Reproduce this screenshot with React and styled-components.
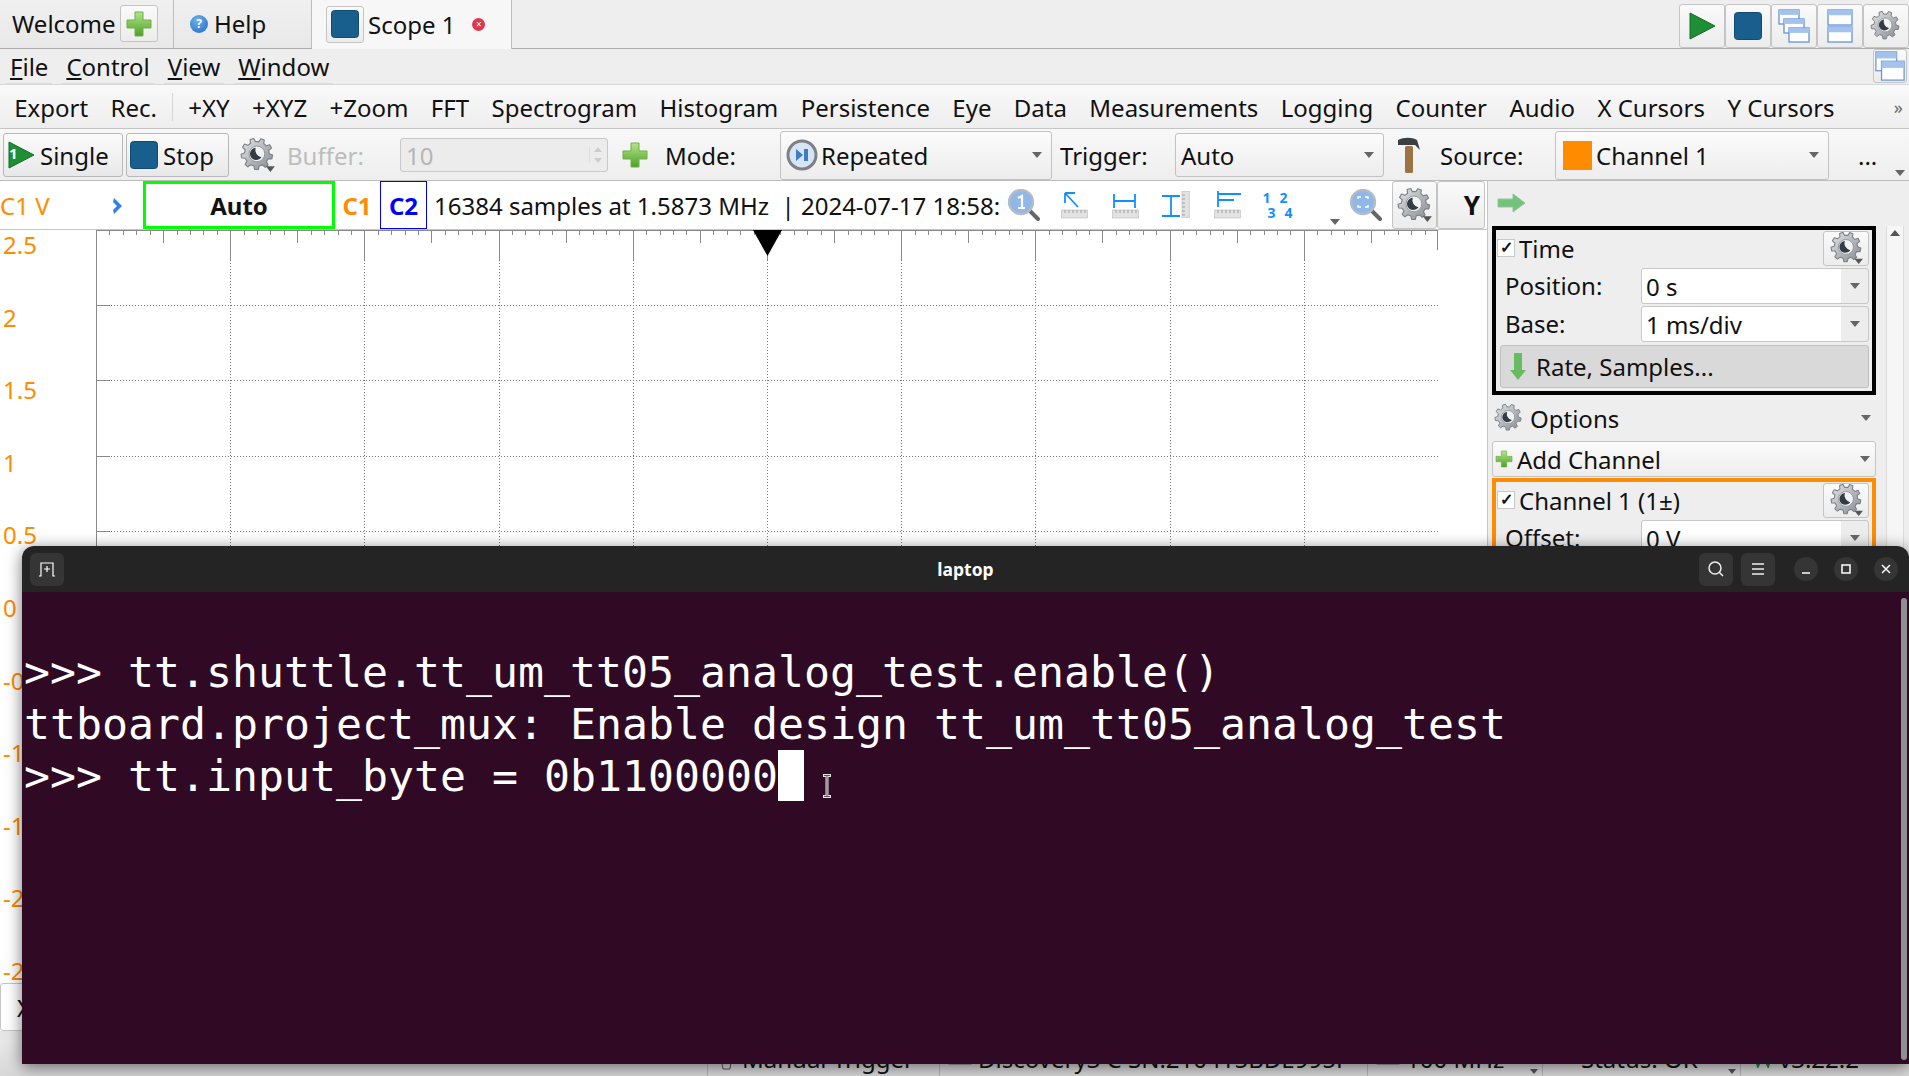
import React from 'react'
import styled, { createGlobalStyle } from 'styled-components'

const GlobalStyle = createGlobalStyle`
  html, body { margin: 0; padding: 0; background: #eee; overflow: hidden; }
  * { box-sizing: border-box; }
  body { font-family: "Noto Sans", "Liberation Sans", sans-serif; color: #111; }
`

const gearPath = (cx, cy, r1, r2, n) => {
  let d = ''
  const step = (Math.PI * 2) / n
  for (let i = 0; i < n; i++) {
    const a = i * step + 0.2
    const pts = [[a - step * 0.3, r1], [a - step * 0.17, r2], [a + step * 0.17, r2], [a + step * 0.3, r1]]
    pts.forEach(([t, r], k) => {
      const x = (cx + Math.cos(t) * r).toFixed(1)
      const y = (cy + Math.sin(t) * r).toFixed(1)
      d += `${i === 0 && k === 0 ? 'M' : 'L'}${x} ${y}`
    })
  }
  return d + 'Z'
}

const Gear = ({ size = 32, arrow }) => (
  <svg width={size} height={size} viewBox="0 0 32 32">
    <defs>
      <linearGradient id="gearFill" x1="0" y1="0" x2="1" y2="1">
        <stop offset="0" stopColor="#e4e6e8" />
        <stop offset="1" stopColor="#868b91" />
      </linearGradient>
    </defs>
    <path d={gearPath(15, 15, 11, 14, 9)} fill="url(#gearFill)" stroke="#7b8086" strokeWidth="1" strokeLinejoin="round" />
    <circle cx="15" cy="15" r="7" fill="#f1f2f3" stroke="#8c9096" strokeWidth="0.8" />
    <path d="M14 9.5a5.5 5.5 0 1 0 5 8.5 6.5 6.5 0 0 1-5-8.500z" fill="#333b45" />
    {arrow && <path d="M23 26h8l-4 5z" fill="#555" />}
  </svg>
)

const Plus = ({ size = 30 }) => (
  <svg width={size} height={size} viewBox="0 0 30 30">
    <defs>
      <linearGradient id="plusFill" x1="0" y1="0" x2="0" y2="1">
        <stop offset="0" stopColor="#b4e58c" />
        <stop offset="1" stopColor="#4f9f26" />
      </linearGradient>
    </defs>
    <path d="M11 3h8v8h8v8h-8v8h-8v-8H3v-8h8z" fill="url(#plusFill)" stroke="#6fb04a" strokeWidth="1" strokeLinejoin="round" />
  </svg>
)

const Play = ({ size = 30 }) => (
  <svg width={size} height={size} viewBox="0 0 30 30">
    <path d="M3 2l25 13L3 28z" fill="#1d8f35" stroke="#146a27" strokeWidth="1" strokeLinejoin="round" />
  </svg>
)

const StopIcon = ({ size = 30 }) => (
  <svg width={size} height={size} viewBox="0 0 30 30">
    <rect x="1.5" y="1.5" width="27" height="27" rx="3" fill="#185f8e" stroke="#134a6f" />
  </svg>
)

const Win = ({ x, y, w, h }) => (
  <g>
    <rect x={x} y={y} width={w} height={h} fill="#fff" stroke="#6f9ad4" strokeWidth="1.4" />
    <rect x={x} y={y} width={w} height={h * 0.35} fill="#a3c3ec" />
  </g>
)

const WindowsIcon = ({ kind }) => (
  <svg width="34" height="36" viewBox="0 0 34 36">
    {kind === 'stack' && <><Win x={2} y={2} w={20} h={14} /><Win x={7} y={11} w={20} h={14} /><Win x={12} y={20} w={20} h={14} /></>}
    {kind === 'rows' && <><Win x={5} y={2} w={24} h={15} /><Win x={5} y={19} w={24} h={15} /></>}
    {kind === 'pair' && <><Win x={2} y={3} w={22} h={20} /><Win x={8} y={13} w={24} h={20} /></>}
  </svg>
)

const Hammer = () => (
  <svg width="26" height="38" viewBox="0 0 26 38">
    <rect x="9" y="10" width="8" height="27" rx="1.5" fill="#9c7443" />
    <path d="M2 4c6-3 14-3 19 0l3 10-5-5H8L2 9z" fill="#3b3f44" />
  </svg>
)

const RepeatIcon = () => (
  <svg width="32" height="32" viewBox="0 0 32 32">
    <circle cx="16" cy="16" r="14" fill="#d6e4f6" stroke="#7d8084" strokeWidth="3" />
    <path d="M10 10l7 6-7 6zM18 10h4v12h-4z" fill="#3f7cc4" />
  </svg>
)

const Lens = ({ inner }) => (
  <svg width="32" height="32" viewBox="0 0 32 32">
    <path d="M21 21l9 9" stroke="#666" strokeWidth="4" strokeLinecap="round" />
    <circle cx="13" cy="13" r="12" fill="#8fb7e8" stroke="#b6bcc4" strokeWidth="2.4" />
    {inner === 'fit' && <path d="M8 10V8h3M15 8h3v2M18 16v2h-3M11 18H8v-2" stroke="#fff" strokeWidth="1.4" fill="none" />}
    {inner === 'one' && <path d="M10 9l4-2v12M10 19h7" stroke="#fff" strokeWidth="2.2" fill="none" />}
  </svg>
)

const Ruler = ({ vertical }) => vertical ? (
  <g>
    <rect x="20" y="0.5" width="8" height="26" fill="#e2e2e2" stroke="#bbb" strokeWidth="0.6" />
    {[4, 8, 12, 16, 20, 24].map((y) => <path key={y} d={`M20 ${y}h3`} stroke="#888" strokeWidth="0.7" />)}
  </g>
) : (
  <g>
    <rect x="0.5" y="19" width="26" height="8" fill="#e2e2e2" stroke="#bbb" strokeWidth="0.6" />
    {[4, 8, 12, 16, 20, 24].map((x) => <path key={x} d={`M${x} 19v3`} stroke="#888" strokeWidth="0.7" />)}
  </g>
)

const RulerIcon = ({ kind }) => (
  <svg width="28" height="28" viewBox="0 0 28 28">
    <Ruler vertical={kind === 'beam'} />
    <g stroke="#1090ff" strokeWidth="1.8" fill="none">
      {kind === 'arrow' && <path d="M4 2l13 14M4 2v10M4 2h10" />}
      {kind === 'width' && <path d="M2 3v14M23 3v14M2 10h21" />}
      {kind === 'beam' && <path d="M0 5h18M0 25h18M9 5v20" />}
      {kind === 'levels' && <path d="M4 0v16M4 3h23M4 9h16" />}
    </g>
  </svg>
)

const Screen = styled.div`
  position: relative;
  width: 1909px;
  height: 1076px;
  overflow: hidden;
  display: flex;
  flex-direction: column;
  background: #eee;
  font-size: 24px;
`

const TabBar = styled.div`
  height: 49px;
  flex: none;
  display: flex;
  border-bottom: 1px solid #aeaeae;
  background: #eee;
`

const Tab = styled.div`
  width: ${(p) => p.$w}px;
  height: ${(p) => (p.$active ? 49 : 48)}px;
  display: flex;
  align-items: center;
  padding-left: ${(p) => p.$pad}px;
  padding-bottom: 1px;
  gap: ${(p) => p.$gap || 0}px;
  background: ${(p) => (p.$active ? '#f7f7f7' : 'linear-gradient(#f0f0f0, #e8e8e8)')};
  border-right: 1px solid #bdbdbd;
`

const IconButton = styled.div`
  width: ${(p) => p.$w || 46}px;
  height: ${(p) => p.$h || 44}px;
  flex: none;
  display: flex;
  align-items: center;
  justify-content: center;
  border: 1px solid #c4c4c4;
  border-radius: 3px;
  background: linear-gradient(#fafafa, #ececec);
`

const GearButton = styled(IconButton)`
  justify-content: flex-start;
  padding-left: 6px;
`

const HelpDot = styled.span`
  width: 18px;
  height: 18px;
  border-radius: 50%;
  background: radial-gradient(circle at 40% 30%, #6fb0ee, #1f68c4);
  color: #fff;
  font-size: 12px;
  font-weight: 700;
  display: flex;
  align-items: center;
  justify-content: center;
`

const CloseDot = styled.span`
  width: 13px;
  height: 13px;
  margin-left: 13px;
  border-radius: 50%;
  background: #e0364c;
  color: #fff;
  font-size: 10px;
  line-height: 13px;
  text-align: center;
`

const TabFill = styled.div`
  flex: 1;
`

const TopActions = styled.div`
  display: flex;
  align-self: flex-start;
  padding-top: 4px;
  height: 48px;
  & > div { height: 44px; }
`

const MenuRow = styled.div`
  height: 36px;
  flex: none;
  display: flex;
  align-items: stretch;
  justify-content: space-between;
  padding-left: 6px;
  padding-right: 2px;
  background: #eee;
  border-bottom: 1px solid #d8d8d8;
`

const MenuList = styled.div`
  display: flex;
  gap: 10px;
`

const MenuItem = styled.div`
  padding: 0 4px;
  display: flex;
  align-items: center;
  border-bottom: 1px solid #dcdcdc;
`

const ToolRow = styled.div`
  height: 44px;
  flex: none;
  display: flex;
  align-items: center;
  padding: 1px 0 0 3px;
  background: linear-gradient(#f9f9f9, #eee);
  border-bottom: 1px solid #c4c4c4;
`

const ToolItem = styled.div`
  padding: 0 11.2px;
  white-space: nowrap;
`

const ToolSep = styled.div`
  width: 1px;
  height: 28px;
  margin: 0 4px;
  background: #d6d6d6;
`

const MoreMark = styled.div`
  margin-left: auto;
  padding-right: 6px;
  font-size: 18px;
  color: #666;
`

const ControlRow = styled.div`
  height: 52px;
  flex: none;
  display: flex;
  align-items: center;
  padding: 1px 0 0 3px;
  background: linear-gradient(#f8f8f8, #eee);
  border-bottom: 1px solid #bcbcbc;
`

const ActionButton = styled.div`
  width: ${(p) => p.$w}px;
  height: 44px;
  margin-right: 3px;
  flex: none;
  display: flex;
  align-items: center;
  gap: 4px;
  padding-left: 2px;
  border: 1px solid #b8b8b8;
  border-radius: 3px;
  background: linear-gradient(#fbfbfb, #e8e8e8);
`

const PlayBadge = styled.span`
  position: relative;
  display: flex;
  & > b {
    position: absolute;
    left: 3px;
    top: 3px;
    color: #fff;
    font-size: 15px;
    font-weight: 700;
  }
`

const Slot = styled.div`
  width: ${(p) => p.$w}px;
  margin-left: ${(p) => p.$ml || 0}px;
  flex: none;
  display: flex;
  align-items: center;
  color: ${(p) => (p.$muted ? '#bdbdbd' : 'inherit')};
`

const SpinBox = styled.div`
  width: 208px;
  height: 34px;
  flex: none;
  display: flex;
  align-items: center;
  justify-content: space-between;
  padding: 0 5px;
  color: #b5b5b5;
  border: 1px solid #c8c8c8;
  border-radius: 3px;
  background: #ececec;
`

const SpinArrows = styled.span`
  display: flex;
  flex-direction: column;
  gap: 6px;
  padding-left: 4px;
  border-left: 1px solid #ddd;
  &::before, &::after {
    content: '';
    border-left: 4px solid transparent;
    border-right: 4px solid transparent;
  }
  &::before { border-bottom: 5px solid #ccc; }
  &::after { border-top: 5px solid #ccc; }
`

const Combo = styled.div`
  width: ${(p) => p.$w}px;
  height: ${(p) => p.$h}px;
  flex: none;
  display: flex;
  align-items: center;
  gap: ${(p) => p.$gap || 0}px;
  padding-left: ${(p) => p.$pad || 5}px;
  position: relative;
  border: 1px solid #c2c2c2;
  border-radius: 3px;
  background: linear-gradient(#fbfbfb, #ededed);
`

const Caret = styled.span`
  position: absolute;
  right: ${(p) => p.$r || 9}px;
  top: 50%;
  margin-top: -3px;
  border-left: 5px solid transparent;
  border-right: 5px solid transparent;
  border-top: 6px solid #666;
`

const Swatch = styled.span`
  width: 29px;
  height: 29px;
  background: #ff8c00;
`

const Workspace = styled.div`
  flex: 1;
  min-height: 0;
  display: flex;
`

const MainColumn = styled.div`
  width: 1488px;
  flex: none;
  display: flex;
  flex-direction: column;
  background: #fff;
  border-right: 1px solid #c6c6c6;
`

const InfoRow = styled.div`
  height: 49px;
  flex: none;
  display: flex;
  align-items: center;
  background: #fff;
  border-bottom: 1px solid #c6c6c6;
`

const AxisName = styled.div`
  width: 117px;
  flex: none;
  color: #ff8c00;
  position: relative;
  & > svg {
    position: absolute;
    left: 111px;
    top: 8px;
  }
`

const AutoBox = styled.div`
  width: 192px;
  height: 48px;
  margin-left: 26px;
  flex: none;
  display: flex;
  align-items: center;
  justify-content: center;
  font-weight: 700;
  border: 3px solid #00ff00;
`

const ChannelTag = styled.div`
  width: ${(p) => p.$w}px;
  height: 48px;
  margin-left: ${(p) => p.$ml}px;
  flex: none;
  display: flex;
  align-items: center;
  justify-content: center;
  font-weight: 700;
  color: ${(p) => p.$color};
  border: ${(p) => (p.$boxed ? `1px solid ${p.$color}` : 'none')};
`

const InfoText = styled.div`
  margin-left: 7px;
  width: 572px;
  flex: none;
  white-space: pre;
`

const InfoIcon = styled.div`
  margin-left: ${(p) => p.$ml}px;
  flex: none;
  display: flex;
`

const NumberGrid = styled.div`
  margin-left: 16px;
  width: 34px;
  flex: none;
  display: grid;
  grid-template-columns: 1fr 1fr;
  font-size: 14px;
  font-weight: 700;
  line-height: 15px;
  text-align: center;
  color: #1090ff;
  & > span:nth-child(n + 3) { transform: translateX(5px); }
`

const SmallCaret = styled.span`
  margin-left: ${(p) => p.$ml}px;
  align-self: flex-end;
  margin-bottom: 4px;
  flex: none;
  border-left: 5px solid transparent;
  border-right: 5px solid transparent;
  border-top: 6px solid #666;
`

const YTag = styled(IconButton)`
  width: 48px;
  height: 48px;
  justify-content: flex-end;
  padding-right: 4px;
  font-size: 26px;
  font-weight: 700;
`

const PlotRow = styled.div`
  flex: 1;
  min-height: 0;
  display: flex;
  overflow: hidden;
`

const YAxis = styled.div`
  width: 96px;
  flex: none;
  display: flex;
  flex-direction: column;
  gap: 42.6px;
  padding-left: 3px;
  color: #ff8c00;
`

const YLabel = styled.div`
  height: 30px;
  line-height: 30px;
`

const XRow = styled.div`
  height: 48px;
  flex: none;
  display: flex;
  align-items: center;
  padding-left: 16px;
  background: #fff;
  border: 1px solid #c6c6c6;
  border-radius: 3px;
`

const BottomGap = styled.div`
  height: 9px;
  flex: none;
  background: #e6e6e6;
`

const SideColumn = styled.div`
  flex: 1;
  display: flex;
  flex-direction: column;
  overflow: hidden;
  background: #eee;
`

const SideHeader = styled.div`
  height: 45px;
  flex: none;
  padding: 6px 0 0 9px;
`

const SideBody = styled.div`
  display: flex;
  align-items: flex-start;
`

const SideStack = styled.div`
  width: 384px;
  margin-left: 4px;
  flex: none;
  display: flex;
  flex-direction: column;
`

const Scroll = styled.div`
  width: 18px;
  height: 800px;
  margin-left: 10px;
  flex: none;
  background: #f6f6f6;
  border-left: 1px solid #ddd;
  border-right: 1px solid #ddd;
  display: flex;
  justify-content: center;
  padding-top: 4px;
  &::before {
    content: '';
    height: 0;
    border-left: 5px solid transparent;
    border-right: 5px solid transparent;
    border-bottom: 6px solid #555;
  }
`

const Group = styled.div`
  border: 4px solid ${(p) => p.$color};
  padding: 0 3px 3px 1px;
  display: flex;
  flex-direction: column;
`

const GroupHead = styled.div`
  height: 36px;
  display: flex;
  align-items: center;
  justify-content: space-between;
`

const Check = styled.label`
  display: flex;
  align-items: center;
  gap: 4px;
  &::before {
    content: '✓';
    width: 16px;
    height: 16px;
    font-size: 16px;
    line-height: 15px;
    text-align: center;
    font-weight: 700;
    background: #fff;
    border: 1px solid #c8c8c8;
  }
`

const FieldRow = styled.div`
  display: flex;
  align-items: center;
  justify-content: space-between;
  padding-left: 8px;
  height: 37px;
  margin-top: 1px;
`

const Field = styled.div`
  width: 228px;
  height: 36px;
  position: relative;
  padding-left: 4px;
  line-height: 35px;
  background: linear-gradient(90deg, #fff 88%, #ededed 88%);
  border: 1px solid #c8c8c8;
  border-radius: 3px;
`

const RateButton = styled.div`
  height: 43px;
  margin: 3px 0 0 3px;
  display: flex;
  align-items: center;
  gap: 9px;
  padding-left: 8px;
  background: #d9d9d9;
  border: 1px solid #c0c0c0;
  border-radius: 3px;
`

const OptionsRow = styled.div`
  height: 46px;
  position: relative;
  display: flex;
  align-items: center;
  gap: 6px;
  padding-left: 2px;
`

const AddButton = styled.div`
  height: 36px;
  margin-bottom: 1px;
  position: relative;
  display: flex;
  align-items: center;
  gap: 3px;
  padding-left: 1px;
  background: linear-gradient(#fbfbfb, #ededed);
  border: 1px solid #c4c4c4;
  border-radius: 3px;
`

const StatusBar = styled.div`
  height: 36px;
  flex: none;
  display: flex;
  align-items: center;
  background: linear-gradient(#e8e8e8, #d8d8d8);
`

const StatusCell = styled.div`
  width: ${(p) => p.$w}px;
  height: 36px;
  flex: none;
  position: relative;
  display: flex;
  align-items: center;
  gap: 6px;
  padding-left: ${(p) => p.$pad}px;
  border-left: ${(p) => (p.$line ? '1px solid #b8b8b8' : 'none')};
`

const StatusCaret = styled.span`
  position: absolute;
  right: 4px;
  bottom: 2px;
  border-left: 4px solid transparent;
  border-right: 4px solid transparent;
  border-top: 5px solid #555;
`

const Terminal = styled.div`
  position: absolute;
  left: 22px;
  top: 546px;
  width: 1887px;
  height: 518px;
  display: flex;
  flex-direction: column;
  border-radius: 12px 12px 0 0;
  overflow: hidden;
`

const TerminalShadow = styled.div`
  position: absolute;
  left: 22px;
  top: 546px;
  width: 1887px;
  height: 518px;
  border-radius: 12px 12px 0 0;
  box-shadow: 0 3px 16px rgba(0, 0, 0, 0.55);
`

const TerminalBar = styled.div`
  height: 46px;
  flex: none;
  display: flex;
  align-items: center;
  padding: 0 11px 0 8px;
  background: #242424;
`

const BarButton = styled.div`
  width: 34px;
  height: 33px;
  flex: none;
  display: flex;
  align-items: center;
  justify-content: center;
  margin-left: ${(p) => p.$ml || 0}px;
  border-radius: 6px;
  background: #353535;
`

const RoundButton = styled(BarButton)`
  width: 24px;
  height: 24px;
  border-radius: 50%;
  margin-left: ${(p) => p.$ml}px;
`

const TerminalTitle = styled.div`
  flex: 1;
  text-align: center;
  padding-left: 168px;
  color: #fff;
  font-size: 17.5px;
  font-weight: 700;
`

const TerminalBody = styled.div`
  flex: 1;
  position: relative;
  padding: 54px 0 0 2px;
  background: #300a24;
  color: #fff;
  font-family: "DejaVu Sans Mono", monospace;
  font-size: 43.2px;
  line-height: 52.2px;
  white-space: pre;
`

const Cursor = styled.span`
  display: inline-block;
  width: 26px;
  height: 51px;
  vertical-align: top;
  background: #fff;
`

const IBeam = styled.svg`
  position: absolute;
  left: 800px;
  top: 182px;
`

const ScrollThumb = styled.div`
  position: absolute;
  right: 2px;
  top: 6px;
  bottom: 4px;
  width: 6px;
  border-radius: 3px;
  background: #8f8f8f;
`

const ARROW_ICON = <svg width="29" height="20" viewBox="0 0 29 20"><path d="M1 6h15V1l12 9-12 9v-5H1z" fill="#74c27c" stroke="#8fc994" /></svg>

const toolNames = ['+XY', '+XYZ', '+Zoom', 'FFT', 'Spectrogram', 'Histogram', 'Persistence', 'Eye', 'Data', 'Measurements', 'Logging', 'Counter', 'Audio', 'X Cursors', 'Y Cursors']
const yLabels = ['2.5', '2', '1.5', '1', '0.5', '0', '-0.5', '-1', '-1.5', '-2', '-2.5']

const PlotGrid = () => {
  const W = 1342
  const H = 760
  const dx = 134.2
  const dy = 75.2
  const cols = Array.from({ length: 11 }, (_, i) => i * dx)
  const rows = Array.from({ length: 11 }, (_, i) => i * dy)
  const minor = Array.from({ length: 101 }, (_, i) => i * (dx / 10))
  return (
    <svg width={W} height={H} viewBox={`0 0 ${W} ${H}`}>
      {rows.slice(1).map((y) => <path key={y} d={`M0 ${Math.round(y) + 0.5}H${W}`} stroke="#777" strokeDasharray="1 2" />)}
      {cols.slice(1).map((x) => <path key={x} d={`M${Math.round(x) + 0.5} 0V${H}`} stroke="#777" strokeDasharray="1 2" />)}
      {minor.map((x, i) => (
        <path key={x} d={`M${Math.round(x) + 0.5} 0v${i % 10 === 0 ? 30 : i % 5 === 0 ? 13 : 5}`} stroke="#8a8a8a" />
      ))}
      {rows.map((y) => <path key={y} d={`M0 ${Math.round(y) + 0.5}h14`} stroke="#8a8a8a" />)}
      <path d="M0.5 0V760M0 0.5H1342M1341.5 0V20" stroke="#8a8a8a" fill="none" />
      <path d="M657 0h29l-14.5 26z" fill="#000" />
    </svg>
  )
}

const App = () => (
  <>
    <GlobalStyle />
    <Screen>
      <TabBar>
        <Tab $w={174} $pad={12} $gap={4}>
          Welcome
          <IconButton $w={38} $h={37}><Plus /></IconButton>
        </Tab>
        <Tab $w={138} $pad={16} $gap={6}><HelpDot>?</HelpDot>Help</Tab>
        <Tab $w={200} $pad={14} $gap={4} $active>
          <IconButton $w={38} $h={37}><StopIcon /></IconButton>
          Scope 1
          <CloseDot>×</CloseDot>
        </Tab>
        <TabFill />
        <TopActions>
          <IconButton><Play /></IconButton>
          <IconButton><StopIcon /></IconButton>
          <IconButton><WindowsIcon kind="stack" /></IconButton>
          <IconButton><WindowsIcon kind="rows" /></IconButton>
          <IconButton><Gear /></IconButton>
        </TopActions>
      </TabBar>

      <MenuRow>
        <MenuList>
          <MenuItem><span><u>F</u>ile</span></MenuItem>
          <MenuItem><span><u>C</u>ontrol</span></MenuItem>
          <MenuItem><span><u>V</u>iew</span></MenuItem>
          <MenuItem><span><u>W</u>indow</span></MenuItem>
        </MenuList>
        <IconButton $w={34} $h={34}><WindowsIcon kind="pair" /></IconButton>
      </MenuRow>

      <ToolRow>
        <ToolItem>Export</ToolItem>
        <ToolItem>Rec.</ToolItem>
        <ToolSep />
        {toolNames.map((name) => <ToolItem key={name}>{name}</ToolItem>)}
        <MoreMark>»</MoreMark>
      </ToolRow>

      <ControlRow>
        <ActionButton $w={120}>
          <PlayBadge><Play /><b>1</b></PlayBadge>
          Single
        </ActionButton>
        <ActionButton $w={103}><StopIcon />Stop</ActionButton>
        <Slot $ml={8} $w={36}><Gear size={36} arrow /></Slot>
        <Slot $ml={11} $w={113} $muted>Buffer:</Slot>
        <SpinBox>10<SpinArrows /></SpinBox>
        <Slot $ml={12} $w={30}><Plus /></Slot>
        <Slot $ml={15} $w={115}>Mode:</Slot>
        <Combo $w={272} $h={49} $gap={3} $pad={5}>
          <RepeatIcon />
          Repeated
          <Caret />
        </Combo>
        <Slot $ml={8} $w={115}>Trigger:</Slot>
        <Combo $w={209} $h={44}>Auto<Caret /></Combo>
        <Slot $ml={12} $w={26}><Hammer /></Slot>
        <Slot $ml={18} $w={115}>Source:</Slot>
        <Combo $w={274} $h={49} $gap={4} $pad={7}>
          <Swatch />
          Channel 1
          <Caret />
        </Combo>
        <Slot $ml={29} $w={30}>...</Slot>
        <SmallCaret $ml={7} />
      </ControlRow>

      <Workspace>
        <MainColumn>
          <InfoRow>
            <AxisName>
              C1 V
              <svg width="14" height="18" viewBox="0 0 14 18"><path d="M3 1l8 8-8 8 -1-4 4-4-4-4z" fill="#2f80ed" /></svg>
            </AxisName>
            <AutoBox>Auto</AutoBox>
            <ChannelTag $w={30} $ml={7} $color="#ff8c00">C1</ChannelTag>
            <ChannelTag $w={47} $ml={8} $color="#0000ff" $boxed>C2</ChannelTag>
            <InfoText>16384 samples at 1.5873 MHz  | 2024-07-17 18:58:</InfoText>
            <InfoIcon $ml={2}><Lens inner="one" /></InfoIcon>
            <InfoIcon $ml={21}><RulerIcon kind="arrow" /></InfoIcon>
            <InfoIcon $ml={23}><RulerIcon kind="width" /></InfoIcon>
            <InfoIcon $ml={22}><RulerIcon kind="beam" /></InfoIcon>
            <InfoIcon $ml={24}><RulerIcon kind="levels" /></InfoIcon>
            <NumberGrid><span>1</span><span>2</span><span>3</span><span>4</span></NumberGrid>
            <SmallCaret $ml={38} />
            <InfoIcon $ml={10}><Lens inner="fit" /></InfoIcon>
            <InfoIcon $ml={10}><IconButton $w={45} $h={48}><Gear size={36} arrow /></IconButton></InfoIcon>
            <YTag>Y</YTag>
          </InfoRow>
          <PlotRow>
            <YAxis>
              {yLabels.map((label) => <YLabel key={label}>{label}</YLabel>)}
            </YAxis>
            <PlotGrid />
          </PlotRow>
          <XRow>X</XRow>
          <BottomGap />
        </MainColumn>

        <SideColumn>
          <SideHeader>{ARROW_ICON}</SideHeader>
          <SideBody>
            <SideStack>
              <Group $color="#000">
                <GroupHead>
                  <Check>Time</Check>
                  <GearButton $w={46} $h={35}><Gear size={34} arrow /></GearButton>
                </GroupHead>
                <FieldRow>Position:<Field>0 s<Caret $r={8} /></Field></FieldRow>
                <FieldRow>Base:<Field>1 ms/div<Caret $r={8} /></Field></FieldRow>
                <RateButton>
                  <svg width="18" height="29" viewBox="0 0 18 29"><path d="M5 1h8v17h4l-8 10-8-10h4z" fill="#69bb62" /></svg>
                  Rate, Samples...
                </RateButton>
              </Group>
              <OptionsRow><Gear size={30} />Options<Caret $r={5} /></OptionsRow>
              <AddButton><Plus size={20} />Add Channel<Caret $r={5} /></AddButton>
              <Group $color="#ff8c00">
                <GroupHead>
                  <Check>Channel 1 (1±)</Check>
                  <GearButton $w={46} $h={35}><Gear size={34} arrow /></GearButton>
                </GroupHead>
                <FieldRow>Offset:<Field>0 V<Caret $r={8} /></Field></FieldRow>
              </Group>
            </SideStack>
            <Scroll />
          </SideBody>
        </SideColumn>
      </Workspace>

      <StatusBar>
        <StatusCell $w={707} $pad={0} />
        <StatusCell $w={232} $pad={8} $line>
          <svg width="20" height="28" viewBox="0 0 20 28"><path d="M3 3h14l-3 22H7z" fill="#ddd" stroke="#555" /></svg>
          Manual Trigger
        </StatusCell>
        <StatusCell $w={428} $pad={8} $line>
          <svg width="24" height="18" viewBox="0 0 24 18"><rect x="1" y="3" width="22" height="12" fill="#bbb" stroke="#777" /></svg>
          Discovery3 C SN:210415BDE995F
        </StatusCell>
        <StatusCell $w={175} $pad={8} $line>
          <svg width="24" height="18" viewBox="0 0 24 18"><rect x="1" y="3" width="22" height="12" fill="#bbb" stroke="#777" /></svg>
          100 MHz
          <StatusCaret />
        </StatusCell>
        <StatusCell $w={198} $pad={38} $line>Status: OK<StatusCaret /></StatusCell>
        <StatusCell $w={143} $pad={12} $line>
          <svg width="20" height="20" viewBox="0 0 20 20"><path d="M1 2l4 15 5-11 5 11 4-15" fill="none" stroke="#1a8a4a" strokeWidth="3" /></svg>
          v3.22.2
        </StatusCell>
      </StatusBar>

      <TerminalShadow />
      <Terminal>
        <TerminalBar>
          <BarButton>
            <svg width="18" height="18" viewBox="0 0 18 18" fill="none" stroke="#fff" strokeWidth="1.2"><path d="M1 16h2V3h12v13h2M9 6v6M6 9h6" /></svg>
          </BarButton>
          <TerminalTitle>laptop</TerminalTitle>
          <BarButton>
            <svg width="18" height="18" viewBox="0 0 18 18" fill="none" stroke="#eee" strokeWidth="1.5"><circle cx="8" cy="8" r="6" /><path d="M12.5 12.5L16 16" /></svg>
          </BarButton>
          <BarButton $ml={8}>
            <svg width="16" height="14" viewBox="0 0 16 14" stroke="#eee" strokeWidth="1.3"><path d="M2 2h12M2 7h12M2 12h12" /></svg>
          </BarButton>
          <RoundButton $ml={19}>
            <svg width="12" height="12" viewBox="0 0 12 12" stroke="#fff" strokeWidth="1.5"><path d="M2 10h8" /></svg>
          </RoundButton>
          <RoundButton $ml={16}>
            <svg width="12" height="12" viewBox="0 0 12 12" fill="none" stroke="#fff" strokeWidth="1.5"><rect x="2" y="2" width="8" height="8" /></svg>
          </RoundButton>
          <RoundButton $ml={16}>
            <svg width="12" height="12" viewBox="0 0 12 12" stroke="#fff" strokeWidth="1.5"><path d="M2 2l8 8M10 2l-8 8" /></svg>
          </RoundButton>
        </TerminalBar>
        <TerminalBody>
          {'>>> tt.shuttle.tt_um_tt05_analog_test.enable()\n'}
          {'ttboard.project_mux: Enable design tt_um_tt05_analog_test\n'}
          {'>>> tt.input_byte = 0b1100000'}<Cursor />
          <IBeam width="10" height="24" viewBox="0 0 10 24" fill="none">
            <path d="M1 1.500h8M5 1.500v21M1 22.500h8" stroke="#e4e4e4" strokeWidth="3" />
            <path d="M2 1.500h6M5 2v20M2 22.500h6" stroke="#555" strokeWidth="1" />
          </IBeam>
          <ScrollThumb />
        </TerminalBody>
      </Terminal>
    </Screen>
  </>
)

export default App
